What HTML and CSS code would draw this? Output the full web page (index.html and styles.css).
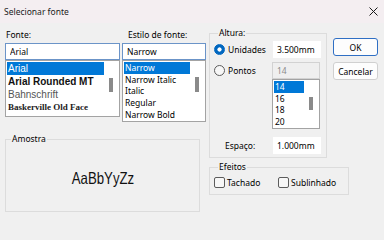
FILE: index.html
```html
<!DOCTYPE html>
<html>
<head>
    <title>Selecionar fonte</title>
    <link rel="stylesheet" href="styles.css">
</head>
<body>
    <div class="titlebar">
        <span class="title">Selecionar fonte</span>
        <svg class="close" width="9" height="9" viewBox="0 0 9 9">
            <path d="M0.5 0.5L8.5 8.5M8.5 0.5L0.5 8.5" stroke="#1a1a1a" stroke-width="1"/>
        </svg>
    </div>

    <div class="dialog">
        <div class="left">
            <div class="pickers">
                <div class="picker picker-font">
                    <label class="label" for="fontName">Fonte:</label>
                    <input type="text" id="fontName" class="textbox" value="Arial">
                    <div class="listbox font-list">
                        <ul class="items">
                            <li class="selected f-arial">Arial</li>
                            <li class="f-rounded">Arial Rounded MT</li>
                            <li class="f-bahn">Bahnschrift</li>
                            <li class="f-bask">Baskerville Old Face</li>
                        </ul>
                        <div class="scrollbar"><div class="thumb"></div></div>
                    </div>
                </div>
                <div class="picker picker-style">
                    <label class="label label-style" for="fontStyle">Estilo de fonte:</label>
                    <input type="text" id="fontStyle" class="textbox" value="Narrow">
                    <div class="listbox style-list">
                        <ul class="items">
                            <li class="selected">Narrow</li>
                            <li>Narrow Italic</li>
                            <li>Italic</li>
                            <li>Regular</li>
                            <li>Narrow Bold</li>
                        </ul>
                        <div class="scrollbar"><div class="thumb"></div></div>
                    </div>
                </div>
            </div>

            <fieldset class="group sample">
                <legend>Amostra</legend>
                <div class="sample-box">
                    <span class="sample-text">AaBbYyZz</span>
                </div>
            </fieldset>
        </div>

        <div class="middle">
            <fieldset class="group size">
                <legend>Altura:</legend>
                <div class="row">
                    <label class="option"><input type="radio" name="unit" class="radio" checked>Unidades</label>
                    <input type="text" class="field" value="3.500mm">
                </div>
                <div class="row row-points">
                    <label class="option"><input type="radio" name="unit" class="radio">Pontos</label>
                    <input type="text" class="field" value="14" disabled>
                </div>
                <div class="listbox size-list">
                    <ul class="items">
                        <li class="selected">14</li>
                        <li>16</li>
                        <li>18</li>
                        <li>20</li>
                    </ul>
                    <div class="scrollbar"><div class="thumb"></div></div>
                </div>
                <div class="row row-space">
                    <span class="option space-label">Espaço:</span>
                    <input type="text" class="field" value="1.000mm">
                </div>
            </fieldset>

            <fieldset class="group effects">
                <legend>Efeitos</legend>
                <div class="checks">
                    <label class="check check-strike"><input type="checkbox" class="checkbox">Tachado</label>
                    <label class="check"><input type="checkbox" class="checkbox">Sublinhado</label>
                </div>
            </fieldset>
        </div>

        <div class="buttons">
            <button class="btn btn-default">OK</button>
            <button class="btn">Cancelar</button>
        </div>
    </div>
</body>
</html>
```

FILE: styles.css
```css
body {
    margin: 0;
    width: 384px;
    height: 240px;
    overflow: hidden;
    background-color: #f0f0f0;
    font-family: "Noto Sans", sans-serif;
    font-size: 8.5px;
    color: #000;
}
.titlebar {
    height: 23px;
    background-color: #f4eef1;
    display: flex;
    align-items: center;
    justify-content: space-between;
}
.title {
    padding-left: 4px;
    color: #1b1b1b;
}
.close {
    margin-right: 6px;
}
.dialog {
    display: flex;
    align-items: flex-start;
    padding: 4px 0 0 5px;
}
.left {
    width: 204px;
    margin-top: 2px;
}
.pickers {
    display: flex;
    align-items: flex-start;
}
.picker-font {
    width: 115px;
}
.picker-style {
    width: 84px;
    margin-left: 2px;
}
.label {
    display: block;
    height: 12px;
    line-height: 12px;
    margin-bottom: 2px;
    padding-left: 1px;
}
.label-style {
    padding-left: 6px;
}
.textbox {
    display: block;
    box-sizing: border-box;
    width: 100%;
    height: 17px;
    margin: 0;
    padding: 0 4px;
    border: 1px solid #6b94c8;
    background-color: #fff;
    font: inherit;
    color: #000;
    outline: none;
}
.listbox {
    display: flex;
    box-sizing: border-box;
    border: 1px solid #a3a3a3;
    background-color: #fff;
    padding: 1px;
    overflow: hidden;
}
.font-list {
    height: 57px;
}
.style-list {
    height: 62px;
}
.size-list {
    width: 48px;
    height: 50px;
    margin-left: 58px;
}
.items {
    flex: 1;
    list-style: none;
    margin: 0;
    padding: 0;
    overflow: hidden;
}
.items li {
    padding-left: 1px;
    white-space: nowrap;
    overflow: hidden;
}
.font-list li {
    height: 13px;
    line-height: 13px;
    font-family: "Liberation Sans", Arial, sans-serif;
    font-size: 10px;
}
.style-list li, .size-list li {
    height: 11.7px;
    line-height: 11.7px;
}
.items .selected {
    background-color: #0078d7;
    color: #fff;
}
.f-rounded {
    font-weight: bold;
    color: #111;
}
.font-list .f-bahn {
    color: #555;
}
.font-list .f-bask {
    font-family: "Liberation Serif", serif;
    font-weight: bold;
    font-size: 9px;
    color: #1a1a1a;
}
.scrollbar {
    flex: none;
    width: 14px;
    display: flex;
    justify-content: center;
}
.thumb {
    width: 4px;
    height: 14px;
    margin-top: 16px;
    background-color: #8a8a8a;
}
.style-list .thumb {
    height: 15px;
    margin-top: 15px;
}
.size-list .thumb {
    height: 13px;
    margin-top: 16px;
}
.group {
    margin: 0;
    padding: 0;
    min-width: 0;
    box-sizing: border-box;
    border: 1px solid #dcdcdc;
}
.group legend {
    margin-left: 4px;
    padding: 0 1px;
    height: 12px;
    line-height: 12px;
}
.sample {
    width: 195px;
    height: 79px;
    margin-top: 11px;
}
.sample legend {
    margin-left: 5px;
}
.sample-box {
    height: 66px;
    display: flex;
    align-items: center;
    justify-content: center;
}
/* Arial Narrow is not installed, so the regular face is squeezed */
.sample-text {
    display: inline-block;
    font-family: "Liberation Sans", Arial, sans-serif;
    font-size: 16.5px;
    line-height: 1;
    color: #111;
    transform: scaleX(0.8);
}
.middle {
    width: 124px;
}
.size {
    width: 118px;
    padding: 2px 0 3px 4px;
}
.row {
    display: flex;
    align-items: center;
    height: 17px;
}
.row-points {
    margin-top: 4px;
}
.row-space {
    margin-top: 8px;
}
.option {
    width: 58px;
    display: flex;
    align-items: center;
}
.space-label {
    box-sizing: border-box;
    padding-left: 11px;
}
.radio {
    appearance: none;
    box-sizing: border-box;
    width: 11px;
    height: 11px;
    margin: 0 3px 0 0;
    border: 1px solid #5c5c5c;
    border-radius: 50%;
    background-color: #f7f7f7;
}
.radio:checked {
    border-color: #0067c0;
    background: radial-gradient(circle, #fff 1.8px, #0067c0 2.4px);
}
.field {
    box-sizing: border-box;
    width: 48px;
    height: 17px;
    margin: 0 0 0 1px;
    padding: 0 3px;
    border: 1px solid #fff;
    background-color: #fff;
    font: inherit;
    color: #000;
    outline: none;
}
.field:disabled {
    margin-left: 0;
    padding-left: 4px;
    border-color: #d2d2d2;
    background-color: #efefef;
    color: #8c8c8c;
}
.effects {
    width: 140px;
    margin-top: 3px;
    padding: 4px 0 6px 4px;
}
.checks {
    display: flex;
    align-items: center;
    height: 11px;
}
.check {
    display: flex;
    align-items: center;
}
.check-strike {
    width: 64px;
}
.checkbox {
    appearance: none;
    box-sizing: border-box;
    width: 11px;
    height: 11px;
    margin: 0 2px 0 0;
    border: 1px solid #5c5c5c;
    border-radius: 2px;
    background-color: #f7f7f7;
}
.buttons {
    width: 45px;
    margin-top: 11px;
    display: flex;
    flex-direction: column;
    gap: 6px;
}
.btn {
    height: 18px;
    box-sizing: border-box;
    padding: 0;
    border: 1px solid #d0d0d0;
    border-radius: 3px;
    background-color: #fdfdfd;
    font: inherit;
    color: #000;
}
.btn-default {
    border-color: #2f6fc4;
}
```
